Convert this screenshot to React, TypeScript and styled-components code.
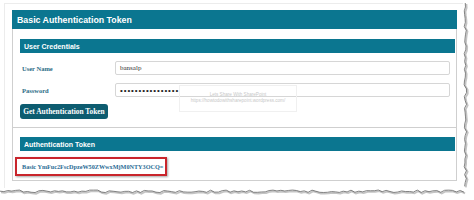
import React from 'react'
import styled, { createGlobalStyle } from 'styled-components'

const GlobalStyle = createGlobalStyle`
  html, body {
    margin: 0;
    padding: 0;
    background: #ffffff;
  }
`

const TEAL = '#0b7690'
const DARK_TEAL = '#0d5c70'
const LABEL_TEAL = '#2c6d86'

const Page = styled.div`
  width: 474px;
  height: 200px;
  display: grid;
  grid-template-columns: 463px 11px;
  grid-template-rows: 188px 12px;
  overflow: hidden;
`

const Sheet = styled.div`
  margin: 3px 0 0 4px;
  border: 1px solid #ececec;
  border-right: none;
  border-bottom: none;
  padding: 6px 0 0 7px;
  position: relative;
`

const Panel = styled.div`
  width: 445px;
`

const PanelHeader = styled.div`
  height: 19px;
  background: ${TEAL};
  color: #ffffff;
  font-family: 'Liberation Sans', Arial, sans-serif;
  font-weight: bold;
  font-size: 8.8px;
  display: flex;
  align-items: center;
  padding-left: 5px;
`

const PanelBody = styled.div`
  border: 1px solid #cfcfcf;
  border-top: none;
  width: 443px;
`

const Section = styled.div<{ $top: number; $bottom: number }>`
  padding: ${(p) => p.$top}px 0 ${(p) => p.$bottom}px 7px;
  & + & {
    border-top: 1px solid #cfcfcf;
  }
`

const SectionHeader = styled.div`
  width: 435px;
  height: 14px;
  background: ${TEAL};
  color: #ffffff;
  font-family: 'Liberation Sans', Arial, sans-serif;
  font-weight: bold;
  font-size: 7px;
  display: flex;
  align-items: center;
  padding-left: 4px;
  box-sizing: border-box;
`

const Form = styled.div`
  margin-top: 8px;
  display: flex;
  flex-direction: column;
  gap: 8px;
`

const Row = styled.div`
  display: grid;
  grid-template-columns: 95px 335px;
  align-items: center;
`

const Label = styled.span`
  padding-left: 2px;
  color: ${LABEL_TEAL};
  font-family: 'Liberation Serif', 'Times New Roman', serif;
  font-weight: bold;
  font-size: 6.5px;
`

const Field = styled.div`
  height: 14px;
  box-sizing: border-box;
  border: 1px solid #d6d6d6;
  border-radius: 2px;
  display: flex;
  align-items: center;
  padding-left: 4px;
  color: #333;
  font-family: 'Liberation Serif', 'Times New Roman', serif;
  font-size: 7px;
`

const Dots = styled.span`
  letter-spacing: 0.9px;
  font-family: 'Liberation Sans', Arial, sans-serif;
  font-size: 8px;
  color: #222;
`

const Button = styled.div`
  margin-top: 7px;
  width: 88px;
  height: 15px;
  border-radius: 3px;
  background: ${DARK_TEAL};
  color: #ffffff;
  font-family: 'Liberation Serif', 'Times New Roman', serif;
  font-weight: bold;
  font-size: 7.4px;
  display: flex;
  align-items: center;
  justify-content: center;
`

const Highlight = styled.div`
  margin: 6px 0 0 -5px;
  width: 152px;
  height: 19px;
  box-sizing: border-box;
  border: 2px solid #c9252c;
  box-shadow: 1px 1px 2px rgba(0, 0, 0, 0.35);
  display: flex;
  align-items: center;
  padding-left: 5px;
  color: #2b6c95;
  font-family: 'Liberation Serif', 'Times New Roman', serif;
  font-weight: bold;
  font-size: 6.2px;
  white-space: nowrap;
`

const Watermark = styled.div`
  position: absolute;
  left: 174px;
  top: 81px;
  width: 118px;
  height: 27px;
  box-sizing: border-box;
  border: 1px solid #f0f0f0;
  display: flex;
  flex-direction: column;
  align-items: center;
  justify-content: center;
  gap: 1px;
  color: #c8c8c8;
  font-family: 'Liberation Sans', Arial, sans-serif;
  font-size: 4.6px;
  line-height: 1;
`

const Edge = styled.svg<{ $span?: boolean }>`
  display: block;
  ${(p) => (p.$span ? 'grid-column: 1 / 3;' : '')}
`

// jagged torn-paper line, deterministic
function jag(count: number, seed: number) {
  const out: number[] = []
  let s = seed
  for (let i = 0; i < count; i++) {
    s = (s * 9301 + 49297) % 233280
    out.push(s / 233280)
  }
  return out
}

function RightEdge() {
  const r = jag(48, 7)
  const pts = r.map((v, i) => `${1 + v * 2.6},${3 + i * 3.9}`).join(' ')
  return (
    <Edge width={11} height={188} viewBox="0 0 11 188">
      <polyline points={pts} fill="none" stroke="#c4c4c4" strokeWidth={1.8} transform="translate(1.2,1)" />
      <polyline points={pts} fill="none" stroke="#666" strokeWidth={0.8} />
    </Edge>
  )
}

function BottomEdge() {
  const r = jag(120, 31)
  const pts = r.map((v, i) => `${i * 3.9},${2 + v * 2.6}`).join(' ')
  return (
    <Edge $span width={474} height={12} viewBox="0 0 474 12">
      <polyline points={pts} fill="none" stroke="#c4c4c4" strokeWidth={1.8} transform="translate(1,1.2)" />
      <polyline points={pts} fill="none" stroke="#666" strokeWidth={0.8} />
    </Edge>
  )
}

export default function App() {
  return (
    <>
      <GlobalStyle />
      <Page>
        <Sheet>
          <Panel>
            <PanelHeader>Basic Authentication Token</PanelHeader>
            <PanelBody>
              <Section $top={10} $bottom={8}>
                <SectionHeader>User Credentials</SectionHeader>
                <Form>
                  <Row>
                    <Label>User Name</Label>
                    <Field>bansalp</Field>
                  </Row>
                  <Row>
                    <Label>Password</Label>
                    <Field>
                      <Dots>••••••••••••••••</Dots>
                    </Field>
                  </Row>
                </Form>
                <Button>Get Authentication Token</Button>
              </Section>
              <Section $top={9} $bottom={4}>
                <SectionHeader>Authentication Token</SectionHeader>
                <Highlight>Basic YmFuc2FscDpzeW50ZWwxMjM0NTY3OCQ=</Highlight>
              </Section>
            </PanelBody>
          </Panel>
          <Watermark>
            <span>Lets Share With SharePoint</span>
            <span>https://howtodowithsharepoint.wordpress.com/</span>
          </Watermark>
        </Sheet>
        <RightEdge />
        <BottomEdge />
      </Page>
    </>
  )
}
